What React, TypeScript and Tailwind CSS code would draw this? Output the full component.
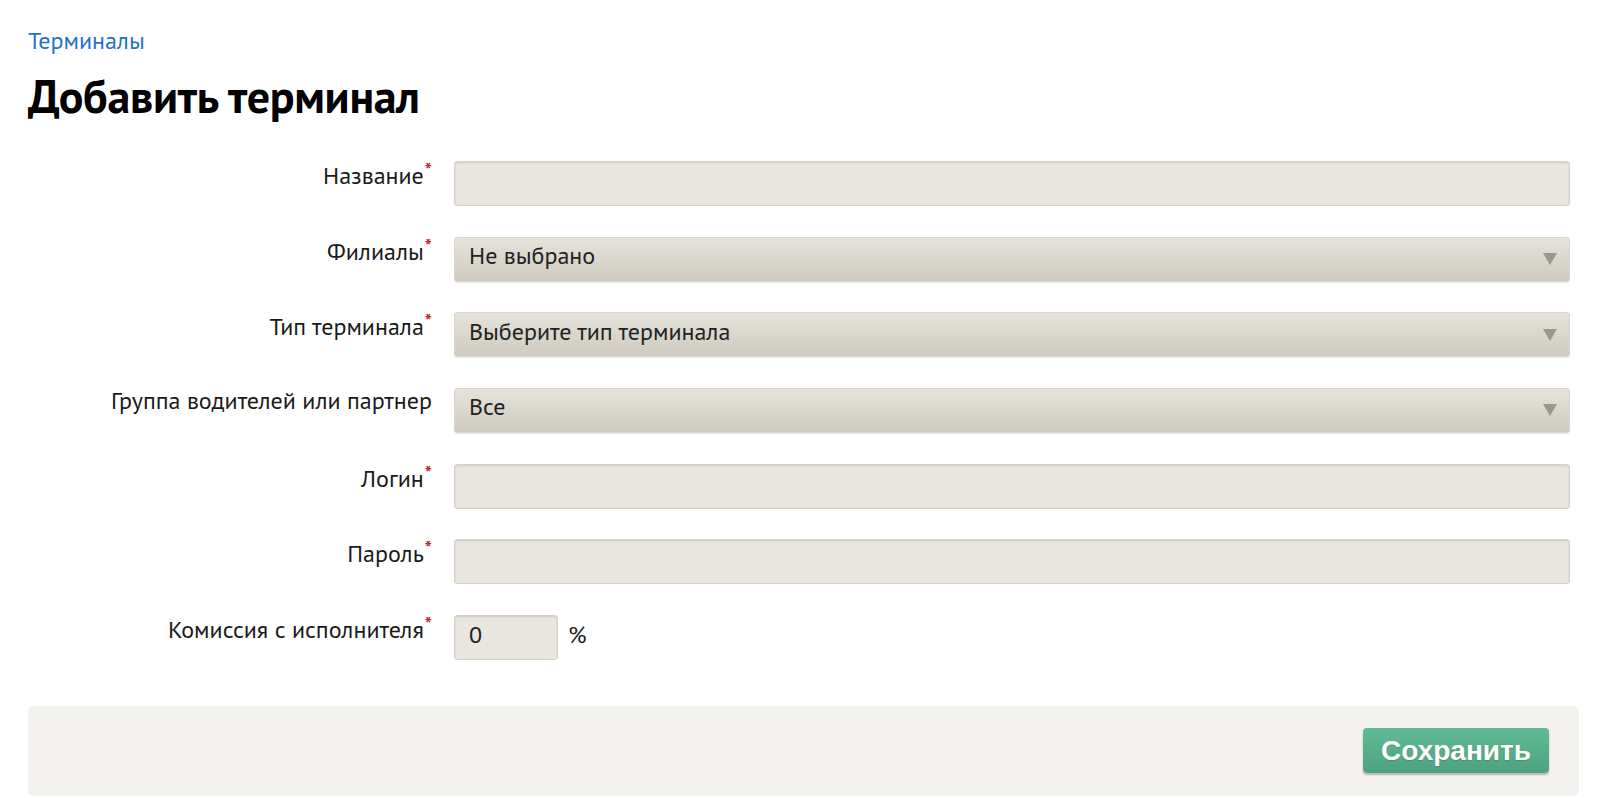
import { ReactNode } from "react";

const font = { fontFamily: "'PT Sans', 'Noto Sans', 'Open Sans', sans-serif" };

const inputClass =
  "h-[45px] rounded-[3px] border border-[#d6d1c8] bg-[#e9e5df] px-[14px] pb-[6px] text-[24px] text-[#222] shadow-[inset_0_1px_2px_rgba(0,0,0,0.12)] outline-none";

const selectClass =
  "flex h-[45px] w-full items-center justify-between rounded-[3px] border border-[#d9d5cc] bg-gradient-to-b from-[#e6e3dc] to-[#cecabf] pb-[6px] pl-[14px] pr-[12px] text-[24px] text-[#222] shadow-[0_1px_1px_rgba(0,0,0,0.08)]";

function Label({ children, required }: { children: ReactNode; required?: boolean }) {
  return (
    <div className="text-right text-[24px] leading-[26px] whitespace-nowrap text-[#1a1a1a]">
      {children}
      {required && (
        <span className="ml-[1px] align-[7px] text-[19px] leading-none font-bold text-[#c4232b]">*</span>
      )}
    </div>
  );
}

function Arrow() {
  return (
    <svg width="14" height="12" viewBox="0 0 14 12" className="mt-[6px]">
      <path d="M0 0 L14 0 L7 12 Z" fill="#9b978c" />
    </svg>
  );
}

function Select({ value }: { value: string }) {
  return (
    <div className={selectClass}>
      <span>{value}</span>
      <Arrow />
    </div>
  );
}

export default function App() {
  return (
    <div className="min-h-[798px] bg-white px-[28px] pt-[25px]" style={font}>
      <a href="#" className="block text-[24px] leading-[32px] text-[#1f73c8]">
        Терминалы
      </a>
      <h1 className="mt-[11px] text-[46px] font-bold leading-[56px] tracking-[-0.3px] text-black">
        Добавить терминал
      </h1>

      <form className="mt-[37px] grid grid-cols-[404px_1fr] gap-x-[22px] gap-y-[30.67px] pr-[2px]">
        <Label required>Название</Label>
        <input className={`${inputClass} w-full`} />

        <Label required>Филиалы</Label>
        <Select value="Не выбрано" />

        <Label required>Тип терминала</Label>
        <Select value="Выберите тип терминала" />

        <Label>Группа водителей или партнер</Label>
        <Select value="Все" />

        <Label required>Логин</Label>
        <input className={`${inputClass} w-full`} />

        <Label required>Пароль</Label>
        <input className={`${inputClass} w-full`} type="password" />

        <Label required>Комиссия с исполнителя</Label>
        <div className="flex items-center gap-[10px]">
          <input className={`${inputClass} w-[104px]`} defaultValue="0" />
          <span className="pb-[4px] text-[24px] text-[#1a1a1a]">%</span>
        </div>
      </form>

      <div className="mt-[46px] -mr-[7px] flex h-[90px] items-center justify-end rounded-[5px] bg-[#f4f2ef] pr-[30px]">
        <button
          type="button"
          className="h-[45px] w-[186px] rounded-[4px] bg-gradient-to-b from-[#5fbb95] to-[#4ea27f] text-[28px] font-bold text-white shadow-[0_2px_2px_rgba(0,0,0,0.25)]"
          style={{ fontFamily: "'Liberation Sans', Arial, sans-serif", textShadow: "0 1px 1px rgba(0,0,0,0.15)" }}
        >
          Сохранить
        </button>
      </div>
    </div>
  );
}
